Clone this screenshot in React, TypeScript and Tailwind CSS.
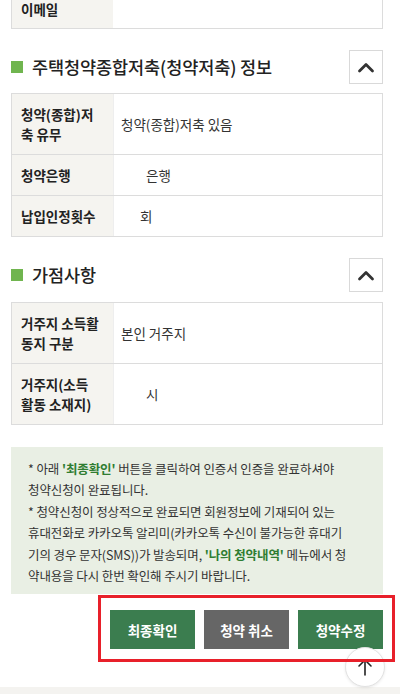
import React from 'react';

const font = { fontFamily: '"Noto Sans CJK KR", "Noto Sans", sans-serif' };

type Row = { label: React.ReactNode; value: string; indent?: string };

function InfoTable({ rows }: { rows: Row[] }) {
  return (
    <div className="border border-[#dcdcdc]">
      {rows.map((row, i) => (
        <div
          key={i}
          className={`flex ${i > 0 ? 'border-t border-[#dcdcdc]' : ''}`}
        >
          <div className="w-[101px] shrink-0 bg-[#f5f4f0] pl-[9px] pr-1 py-[10px] text-[13.5px] font-bold leading-[20px] text-[#222]">
            {row.label}
          </div>
          <div
            className={`flex items-center border-l border-[#eeeeee] py-[10px] text-[13.5px] leading-[20px] text-[#333] ${row.indent ?? 'pl-[7px]'}`}
          >
            {row.value}
          </div>
        </div>
      ))}
    </div>
  );
}

function SectionHeader({ title }: { title: string }) {
  return (
    <div className="flex items-center justify-between">
      <div className="flex items-center gap-[9px]">
        <span className="h-[12px] w-[12px] bg-[#70b54f]" />
        <h3 className="text-[17.5px] font-medium tracking-[-0.1px] text-[#222]">
          {title}
        </h3>
      </div>
      <button className="flex h-[34px] w-[34px] items-center justify-center border border-[#d9d9d9] bg-white">
        <svg width="18" height="11" viewBox="0 0 18 11" fill="none">
          <polyline
            points="2.5,9 9,2.5 15.5,9"
            stroke="#333"
            strokeWidth="2.8"
            strokeLinecap="round"
            strokeLinejoin="round"
          />
        </svg>
      </button>
    </div>
  );
}

export default function App() {
  return (
    <div
      className="relative h-[694px] w-[400px] overflow-hidden bg-white"
      style={font}
    >
      <div className="flex flex-col pl-[11px] pr-[17px]">
        {/* 이메일 (scrolled) */}
        <div className="-mt-[11px] flex border border-[#dcdcdc]">
          <div className="w-[101px] bg-[#f5f4f0] pl-[9px] py-[10px] text-[13.5px] font-bold leading-[18px] text-[#222]">
            이메일
          </div>
          <div className="flex-1" />
        </div>

        <div className="mt-[21px]">
          <SectionHeader title="주택청약종합저축(청약저축) 정보" />
        </div>
        <div className="mt-[9px]">
          <InfoTable
            rows={[
              {
                label: (
                  <>
                    청약(종합)저
                    <br />축 유무
                  </>
                ),
                value: '청약(종합)저축 있음',
              },
              { label: '청약은행', value: '은행', indent: 'pl-[32px]' },
              { label: '납입인정횟수', value: '회', indent: 'pl-[26px]' },
            ]}
          />
        </div>

        <div className="mt-[21px]">
          <SectionHeader title="가점사항" />
        </div>
        <div className="mt-[10px]">
          <InfoTable
            rows={[
              {
                label: (
                  <>
                    거주지 소득활
                    <br />
                    동지 구분
                  </>
                ),
                value: '본인 거주지',
              },
              {
                label: (
                  <>
                    거주지(소득
                    <br />
                    활동 소재지)
                  </>
                ),
                value: '시',
                indent: 'pl-[32px]',
              },
            ]}
          />
        </div>

        {/* 안내 */}
        <div className="mt-[22px] bg-[#e9efe4] pl-[17px] pr-2 pt-[11px] pb-[8px] text-[12.5px] leading-[21.4px] tracking-[-0.1px] text-[#333] whitespace-nowrap">
          <p>
            * 아래{' '}
            <b className="font-bold text-[#2f7d32]">'최종확인'</b> 버튼을
            클릭하여 인증서 인증을 완료하셔야
          </p>
          <p>청약신청이 완료됩니다.</p>
          <p>* 청약신청이 정상적으로 완료되면 회원정보에 기재되어 있는</p>
          <p>휴대전화로 카카오톡 알리미(카카오톡 수신이 불가능한 휴대기</p>
          <p>
            기의 경우 문자(SMS))가 발송되며,{' '}
            <b className="font-bold text-[#2f7d32]">'나의 청약내역'</b> 메뉴에서
            청
          </p>
          <p>약내용을 다시 한번 확인해 주시기 바랍니다.</p>
        </div>

        {/* 버튼 */}
        <div className="relative mt-[16px] flex gap-[9px] self-end">
          <button className="h-[39px] w-[85px] bg-[#3b7d4f] text-[13.5px] font-bold text-white">
            최종확인
          </button>
          <button className="h-[39px] w-[85px] bg-[#666666] text-[13.5px] font-bold text-white">
            청약 취소
          </button>
          <button className="h-[39px] w-[85px] bg-[#3b7d4f] text-[13.5px] font-bold text-white">
            청약수정
          </button>
          <div className="pointer-events-none absolute -left-[12px] -right-[12px] -top-[15px] -bottom-[13px] z-20 border-[3px] border-[#e8202a]" />
        </div>
      </div>

      {/* 맨 위로 */}
      <button className="absolute left-[345px] top-[647px] z-10 flex h-[40px] w-[40px] items-center justify-center rounded-full border border-[#e2e2e2] bg-white shadow-[0_1px_3px_rgba(0,0,0,0.08)]">
        <svg width="16" height="20" viewBox="0 0 16 20" fill="none">
          <path
            d="M8 18V3M2 9l6-6 6 6"
            stroke="#222"
            strokeWidth="1.6"
            strokeLinecap="round"
            strokeLinejoin="round"
          />
        </svg>
      </button>

      <div className="absolute bottom-0 left-0 h-[7px] w-full bg-[#f4f3f0]" />
    </div>
  );
}
